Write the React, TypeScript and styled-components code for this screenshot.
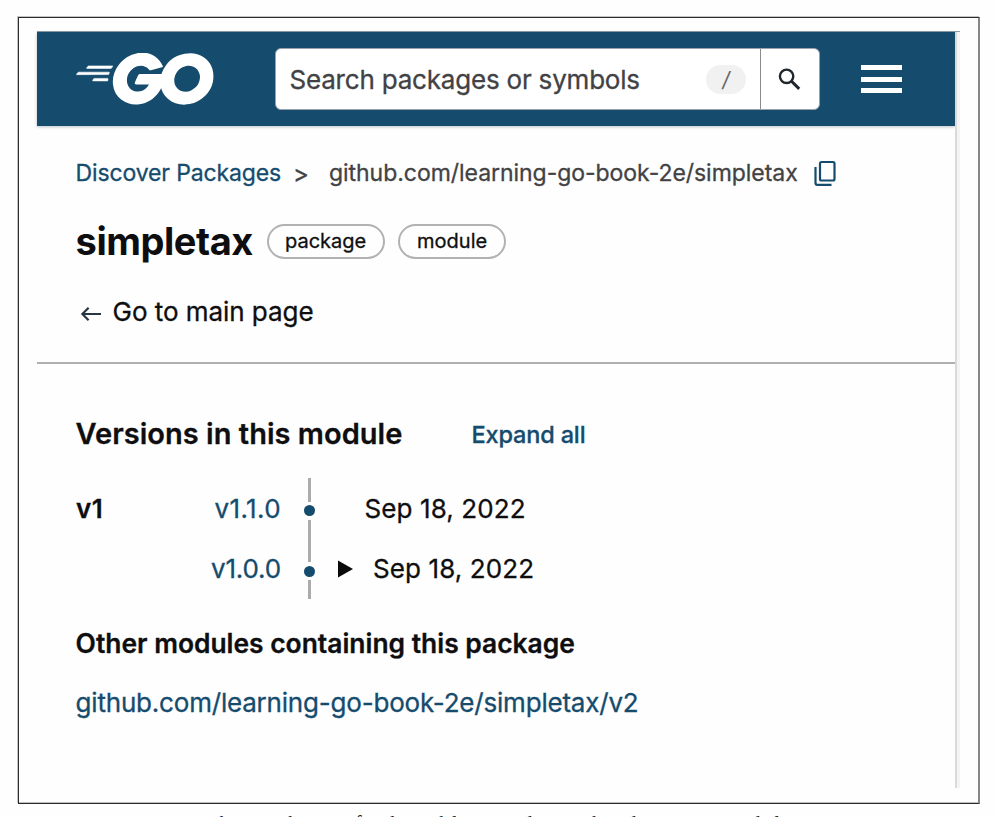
import React from 'react';
import styled, { createGlobalStyle } from 'styled-components';

const BLUE = '#154c6d';

const GlobalStyle = createGlobalStyle`
  *, *::before, *::after { box-sizing: border-box; }
  html, body { margin: 0; background: #fefefe; overflow: hidden; }
  body { font-family: Inter, "Liberation Sans", sans-serif; color: #0e0e10; }
`;

const Sheet = styled.div`
  width: 996px;
  height: 817px;
  overflow: hidden;
  padding: 17px 0 0 18px;
`;

const Figure = styled.div`
  width: 962px;
  height: 787px;
  padding: 13px 0 0 18px;
  border: 1px solid #2c2c2c;
  border-right: 2px solid #868686;
  box-shadow: -1px -1px 0 #c4c4c4, inset 0 -1px 0 #bdbdbd;
`;

const Screen = styled.div`
  width: 923px;
  height: 757px;
  display: flex;
  flex-direction: column;
  border-top: 1px solid #8d9da8;
`;

const Columns = styled.div`
  flex: 1;
  display: flex;
`;

const Page = styled.div`
  width: 918px;
  background: #fefefe;
`;

const Edge = styled.div`
  width: 5px;
  border-left: 2px solid #dadada;
  background: #f4f4f4;
`;

const Header = styled.header`
  height: 94px;
  display: flex;
  align-items: center;
  padding-left: 39px;
  background: ${BLUE};
  box-shadow: 0 1px 3px rgba(20, 50, 70, 0.3);
`;

const Logo = styled.svg`
  width: 138px;
  height: 52px;
  flex: none;
`;

const SearchBox = styled.div`
  display: flex;
  width: 545px;
  height: 62px;
  margin-left: 61px;
  border: 1px solid #9aa0ae;
  border-radius: 6px;
  background: #fff;
`;

const SearchField = styled.div`
  flex: 1;
  display: flex;
  align-items: center;
  justify-content: space-between;
  padding: 0 14px 0 13.5px;
  border-right: 1px solid #8a8a8a;
  color: #424244;
`;

const KeyHint = styled.span`
  width: 40px;
  height: 29px;
  border-radius: 14.5px;
  background: #f1f1f1;
  color: #666;
  display: flex;
  align-items: center;
  justify-content: center;
  font-size: 21px;
  font-style: italic;
`;

const SearchButton = styled.div`
  width: 58px;
  padding-left: 17px;
  display: flex;
  align-items: center;
`;

const Burger = styled.div`
  width: 41px;
  margin-left: 40.5px;
  display: grid;
  gap: 6.5px;
`;

const Bar = styled.i`
  height: 5px;
  background: #fff;
`;

const Text = styled.span<{ $size: number; $spacing?: number; $weight?: number; $color?: string }>`
  font-size: ${(p) => p.$size}px;
  letter-spacing: ${(p) => p.$spacing ?? 0}px;
  font-weight: ${(p) => p.$weight ?? 400};
  color: ${(p) => p.$color ?? 'inherit'};
  -webkit-text-stroke: 0.3px currentColor;
  white-space: nowrap;
`;

const Row = styled.div<{ $top: number; $height?: number }>`
  display: flex;
  align-items: center;
  height: ${(p) => p.$height ?? 40}px;
  margin-top: ${(p) => p.$top}px;
  padding-left: 38.6px;
`;

const Separator = styled(Text)`
  width: 48px;
  padding-left: 12px;
`;

const CopyIcon = styled.svg`
  width: 22px;
  height: 26px;
  margin-left: 16px;
`;

const Heading = styled.h1`
  width: 191px;
  margin: 0;
  font-size: 38px;
  font-weight: 700;
  letter-spacing: -0.45px;
  line-height: 46px;
`;

const Chip = styled.span<{ $width: number }>`
  width: ${(p) => p.$width}px;
  height: 35px;
  margin-right: 13.5px;
  border: 2px solid #b2b2b2;
  border-radius: 18px;
  display: flex;
  align-items: center;
  justify-content: center;
  font-size: 20px;
  -webkit-text-stroke: 0.3px currentColor;
`;

const BackIcon = styled.svg`
  width: 22px;
  height: 16px;
  margin: 5px 11px 0 4px;
`;

const Divider = styled.hr`
  height: 2px;
  margin: 30px 0 0;
  border: 0;
  background: #b0b0b0;
`;

const ExpandAll = styled(Text)`
  margin-left: 69px;
  padding-top: 2px;
`;

const Versions = styled.div`
  margin-top: 25px;
  padding-left: 39px;
`;

const VersionRow = styled.div`
  display: grid;
  grid-template-columns: 104px 101px 56px auto;
  align-items: center;
  height: 60.5px;
`;

const VersionLink = styled(Text)`
  text-align: right;
`;

const Track = styled.div`
  height: 60.5px;
  width: 11px;
  margin-left: 22.5px;
  display: grid;
  grid-template-rows: 23.5px 18px 19px;
  justify-items: center;
  align-items: center;
`;

const Rail = styled.i`
  width: 3px;
  height: 100%;
  background: #ababab;
`;

const Dot = styled.i`
  width: 11px;
  height: 11px;
  border-radius: 50%;
  background: ${BLUE};
`;

const DateCell = styled.div<{ $indent: number }>`
  display: flex;
  align-items: center;
  padding-left: ${(p) => p.$indent}px;
`;

const Marker = styled.svg`
  width: 16px;
  height: 18px;
  margin-right: 20px;
`;

const Caption = styled.div`
  display: flex;
  margin: 8px 0 0 196px;
  font: 20px/23px "Liberation Serif", serif;
  color: #222;
`;

const Word = styled.span<{ $width: number; $spacing?: number }>`
  flex: 0 0 ${(p) => p.$width}px;
  letter-spacing: ${(p) => p.$spacing ?? 0}px;
  white-space: nowrap;
`;

const GoLogo = () => (
  <Logo viewBox="24 78.4 207 76.6" preserveAspectRatio="none" fill="#fff">
    <g stroke="#fff" strokeWidth="0.8">
      <path d="M40.2,101.1c-0.4,0-0.5-0.2-0.3-0.5l2.1-2.7c0.2-0.3,0.7-0.5,1.1-0.5l35.7,0c0.4,0,0.5,0.3,0.3,0.6l-1.7,2.6c-0.2,0.3-0.7,0.6-1,0.6L40.2,101.1z" />
      <path d="M25.1,110.3c-0.4,0-0.5-0.2-0.3-0.5l2.1-2.7c0.2-0.3,0.7-0.5,1.1-0.5l45.6,0c0.4,0,0.6,0.3,0.5,0.6l-0.8,2.4c-0.1,0.4-0.5,0.6-0.9,0.6L25.1,110.3z" />
      <path d="M49.3,119.5c-0.4,0-0.5-0.3-0.3-0.6l1.4-2.5c0.2-0.3,0.6-0.6,1-0.6l20,0c0.4,0,0.6,0.3,0.6,0.7l-0.2,2.4c0,0.4-0.4,0.7-0.7,0.7L49.3,119.5z" />
    </g>
    <path d="M153.1,99.3c-6.3,1.6-10.6,2.8-16.8,4.4c-1.5,0.4-1.6,0.5-2.9-1c-1.5-1.7-2.6-2.8-4.7-3.8c-6.3-3.1-12.4-2.2-18.1,1.5c-6.8,4.4-10.3,10.9-10.2,19c0.1,8,5.6,14.6,13.5,15.7c6.8,0.9,12.5-1.5,17-6.6c0.9-1.1,1.7-2.3,2.7-3.7c-3.6,0-8.1,0-19.3,0c-2.1,0-2.6-1.3-1.9-3c1.3-3.1,3.7-8.3,5.1-10.9c0.3-0.6,1-1.6,2.5-1.6c5.1,0,23.9,0,36.4,0c-0.2,2.7-0.2,5.4-0.6,8.1c-1.1,7.2-3.8,13.8-8.2,19.6c-7.2,9.5-16.6,15.4-28.5,17c-9.8,1.3-18.9-0.6-26.9-6.6c-7.4-5.6-11.6-13-12.7-22.2c-1.3-10.9,1.9-20.7,8.5-29.3c7.1-9.3,16.5-15.2,28-17.3c9.4-1.7,18.4-0.6,26.5,4.9c5.3,3.5,9.1,8.3,11.6,14.1C154.7,98.5,154.3,99,153.1,99.3z" />
    <path fillRule="evenodd" d="M186.2,154.6c-9.1-0.2-17.4-2.8-24.4-8.8c-5.9-5.1-9.6-11.6-10.8-19.3c-1.8-11.3,1.3-21.3,8.1-30.2c7.3-9.6,16.1-14.6,28-16.7c10.2-1.8,19.8-0.8,28.5,5.1c7.9,5.4,12.8,12.7,14.1,22.3c1.7,13.5-2.2,24.5-11.5,33.9c-6.6,6.7-14.7,10.9-24,12.8C191.5,154.2,188.8,154.3,186.2,154.6z M210,114.2c-0.1-1.3-0.1-2.3-0.3-3.3c-1.8-9.9-10.9-15.5-20.4-13.3c-9.3,2.1-15.3,8-17.5,17.4c-1.8,7.8,2,15.7,9.2,18.9c5.5,2.4,11,2.1,16.3-0.6C205.2,129.2,209.5,122.8,210,114.2z" />
  </Logo>
);

const captionWords: [string, number, number?][] = [
  ['the', 43], ['work', 88], ['of', 21], ['and', 62], ['able', 70, 2.5], ['read', 94], ['heard', 129], ['module', 90, 2],
];

export default function App() {
  return (
    <>
      <GlobalStyle />
      <Sheet>
        <Figure>
          <Screen>
            <Columns>
              <Page>
                <Header>
                  <GoLogo />
                  <SearchBox>
                    <SearchField>
                      <Text $size={26} $spacing={-0.2}>Search packages or symbols</Text>
                      <KeyHint>/</KeyHint>
                    </SearchField>
                    <SearchButton>
                      <svg width="23" height="23" viewBox="0 0 23 23" fill="none" stroke="#20262b">
                        <circle cx="8.6" cy="8.3" r="6.7" strokeWidth="2.4" />
                        <path d="M13.3 13 L21.2 20.9" strokeWidth="3" />
                      </svg>
                    </SearchButton>
                  </SearchBox>
                  <Burger><Bar /><Bar /><Bar /></Burger>
                </Header>
                <Row $top={24} $height={46}>
                  <Text $size={23} $spacing={-0.14} $color={BLUE}>Discover Packages</Text>
                  <Separator $size={24} $color="#424244">&gt;</Separator>
                  <Text $size={23} $spacing={-0.04} $color="#424244">github.com/learning-go-book-2e/simpletax</Text>
                  <CopyIcon viewBox="0 0 22 26" fill="none" stroke={BLUE} strokeWidth="2.2">
                    <rect x="6" y="2" width="14.5" height="18.5" rx="1.5" />
                    <path d="M1.5 7 V23 Q1.5 24.8 3.3 24.8 H17.5" />
                  </CopyIcon>
                </Row>
                <Row $top={22} $height={46}>
                  <Heading>simpletax</Heading>
                  <Chip $width={118}>package</Chip>
                  <Chip $width={108}>module</Chip>
                </Row>
                <Row $top={27} $height={41}>
                  <BackIcon viewBox="0 0 22 16" fill="none" stroke="#263645" strokeWidth="2.2">
                    <path d="M21 8 H2.5 M8.6 1.8 L2.4 8 L8.6 14.2" />
                  </BackIcon>
                  <Text $size={26} $spacing={-0.05}>Go to main page</Text>
                </Row>
                <Divider />
                <Row $top={49}>
                  <Text $size={29} $weight={600} $spacing={0.03}>Versions in this module</Text>
                  <ExpandAll $size={23.5} $weight={500} $spacing={-0.15} $color={BLUE}>Expand all</ExpandAll>
                </Row>
                <Versions>
                  <VersionRow>
                    <Text $size={26} $weight={600} $spacing={0.6}>v1</Text>
                    <VersionLink $size={26} $spacing={0.36} $color={BLUE}>v1.1.0</VersionLink>
                    <Track><Rail /><Dot /><Rail /></Track>
                    <DateCell $indent={27.5}>
                      <Text $size={26} $spacing={0.1}>Sep 18, 2022</Text>
                    </DateCell>
                  </VersionRow>
                  <VersionRow>
                    <span />
                    <VersionLink $size={26} $spacing={-0.17} $color={BLUE}>v1.0.0</VersionLink>
                    <Track><Rail /><Dot /><Rail /></Track>
                    <DateCell $indent={0}>
                      <Marker viewBox="0 0 16 18"><path d="M1 0.5 L16 9 L1 17.5 Z" fill="#0a0a0a" /></Marker>
                      <Text $size={26} $spacing={0.1}>Sep 18, 2022</Text>
                    </DateCell>
                  </VersionRow>
                </Versions>
                <Row $top={24}>
                  <Text $size={26.4} $weight={600}>Other modules containing this package</Text>
                </Row>
                <Row $top={19}>
                  <Text $size={26} $spacing={-0.2} $color={BLUE}>github.com/learning-go-book-2e/simpletax/v2</Text>
                </Row>
              </Page>
              <Edge />
            </Columns>
          </Screen>
        </Figure>
        <Caption>
          {captionWords.map(([word, width, spacing]) => (
            <Word key={word} $width={width} $spacing={spacing}>{word}</Word>
          ))}
        </Caption>
      </Sheet>
    </>
  );
}
